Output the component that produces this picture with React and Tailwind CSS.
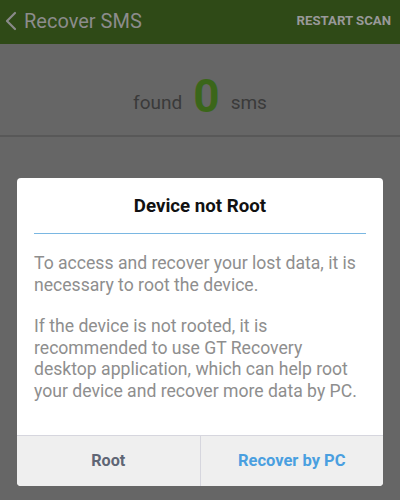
export default function App() {
  return (
    <div className="w-[400px] h-[500px] bg-[#666666] flex flex-col overflow-hidden" style={{ fontFamily: 'Roboto, "Noto Sans", sans-serif' }}>
      <div className="h-[44px] bg-[#2f4a17] flex items-center justify-between pl-[4px] pr-[9px] shrink-0">
        <div className="flex items-center gap-[7px]">
          <svg width="13" height="20" viewBox="0 0 13 20" className="mt-[-2px]">
            <path d="M11 2 L3 10 L11 18" fill="none" stroke="#8a8a8a" strokeWidth="2.2" strokeLinecap="round" strokeLinejoin="round" />
          </svg>
          <span className="text-[20px] text-[#8c8c8c] mt-[-2px]">Recover SMS</span>
        </div>
        <span className="text-[13.2px] font-bold text-[#999999] mt-[-2px]">RESTART SCAN</span>
      </div>
      <div className="h-[93px] flex items-end justify-center pb-[16px] gap-[11px] border-b-2 border-[#585858] shrink-0">
        <span className="text-[19px] text-[#3a3a3a] mb-[2px]">found</span>
        <span className="text-[46px] font-bold text-[#3b6619] leading-[46px]">0</span>
        <span className="text-[19px] text-[#3a3a3a] mb-[2px]">sms</span>
      </div>
      <div className="mt-[41px] mx-[17px] bg-white rounded-[4px] flex flex-col overflow-hidden h-[308px]">
        <div className="h-[56px] mx-[17px] border-b-[1.5px] border-[#7ab7e2] flex items-center justify-center">
          <span className="text-[18.7px] font-bold text-[#111111] mt-[2px]">Device not Root</span>
        </div>
        <div className="px-[17px] pt-[19px] text-[17.6px] leading-[21.5px] text-[#8e8e8e] flex-1 whitespace-nowrap">
          <p>To access and recover your lost data, it is<br />necessary to root the device.</p>
          <p className="mt-[20px]">If the device is not rooted, it is<br />recommended to use GT Recovery<br />desktop application, which can help root<br />your device and recover more data by PC.</p>
        </div>
        <div className="h-[51px] border-t border-[#d6d6de] bg-[#efefef] flex">
          <div className="flex-1 flex items-center justify-center border-r border-[#d6d6de] text-[16.2px] font-bold text-[#5f6675]">Root</div>
          <div className="flex-1 flex items-center justify-center text-[16.5px] font-bold text-[#4a9fe0]">Recover by PC</div>
        </div>
      </div>
    </div>
  );
}
